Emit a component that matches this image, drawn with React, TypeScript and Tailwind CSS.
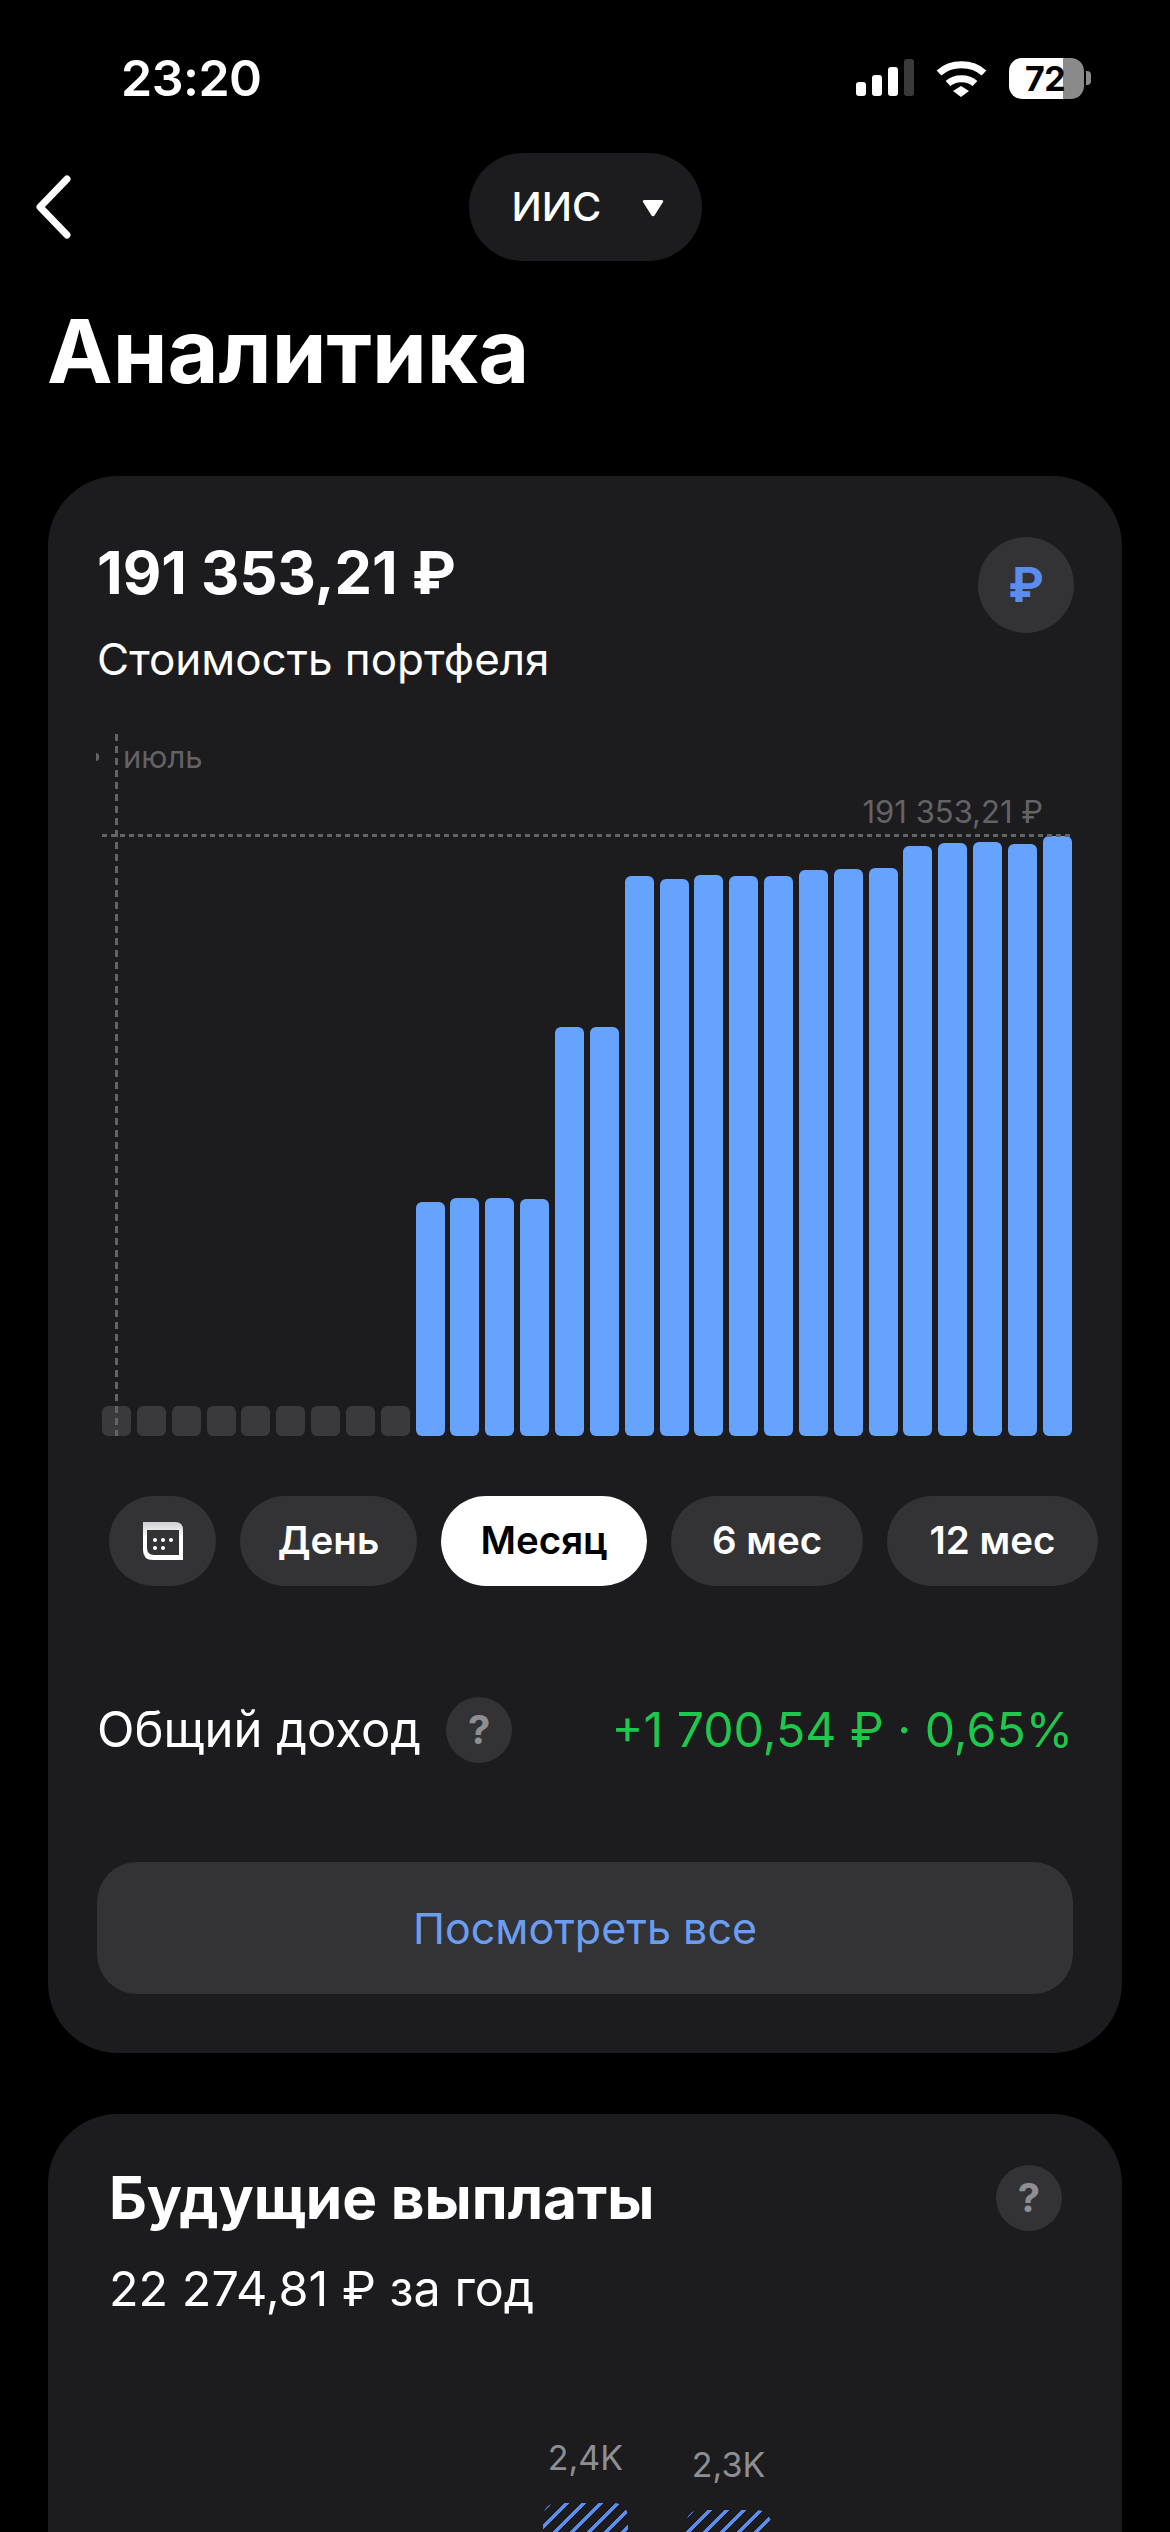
const FONT = "font-['Inter','Noto_Sans',sans-serif]";

// bar tops read off the reference, chart baseline is y=1437
const grayBars = Array.from({ length: 9 }, () => 30);
const blueBars = [
  234, 238, 238, 237, 409, 409, 560, 557, 561, 560, 560, 566, 567, 568, 590, 593, 594, 592, 600,
];

function StatusBar() {
  return (
    <div className="h-[153px] pt-[48px] flex justify-between items-start">
      <div className="ml-[121px] text-[50px] leading-[60px] font-semibold tracking-[-0.5px] text-white">
        23:20
      </div>
      <div className="mr-[79px] h-[60px] flex items-center">
        <div className="flex items-end gap-[6px] h-[37px] mt-[-2px]">
          <div className="w-[10px] h-[14px] rounded-[3px] bg-white" />
          <div className="w-[10px] h-[21px] rounded-[3px] bg-white" />
          <div className="w-[10px] h-[29px] rounded-[3px] bg-white" />
          <div className="w-[10px] h-[37px] rounded-[3px] bg-[#3a3a3c]" />
        </div>
        <svg className="ml-[22px] mt-[-1px]" width="51" height="38" viewBox="0 0 51 38" fill="none">
          <path d="M3 14C15 3 36 3 48 14" stroke="#fff" strokeWidth="7" />
          <path d="M12 24.5C19 18 32 18 39 24.5" stroke="#fff" strokeWidth="7" />
          <path d="M17 32L25 27L33 32L25 38Z" fill="#fff" />
        </svg>
        <div className="ml-[22px] relative w-[75px] h-[41px] rounded-[13px] overflow-hidden flex">
          <div className="w-[54px] bg-white" />
          <div className="flex-1 bg-[#8a8a8a]" />
          <div className="absolute inset-y-0 left-[16px] flex items-center text-[34px] font-bold text-black tracking-[-0.5px]">
            72
          </div>
        </div>
        <div className="ml-[2px] w-[5px] h-[14px] rounded-r-[4px] bg-[#8a8a8a]" />
      </div>
    </div>
  );
}

function NavRow() {
  return (
    <div className="grid grid-cols-[1fr_auto_1fr] items-center h-[108px]">
      <svg className="ml-[34px]" width="40" height="64" viewBox="0 0 40 64" fill="none">
        <path
          d="M33 4L6 32L33 60"
          stroke="#fff"
          strokeWidth="7"
          strokeLinecap="round"
          strokeLinejoin="round"
        />
      </svg>
      <div className="w-[233px] h-[108px] rounded-[54px] bg-[#1c1c1e] flex items-center pl-[43px]">
        <span className="text-[40px] leading-[48px] font-medium text-white">ИИС</span>
        <svg className="ml-[41px] mt-[3px]" width="22" height="17" viewBox="0 0 22 17">
          <path d="M1 2Q0 0 3 0H19Q22 0 21 2L12.5 15.5Q11 17 9.5 15.5Z" fill="#fff" />
        </svg>
      </div>
      <div />
    </div>
  );
}

function Chart() {
  return (
    <div className="relative ml-[54px] mt-[50px] w-[970px] h-[702px]">
      <div className="absolute inset-0 flex items-end justify-between">
        {grayBars.map((h, i) => (
          <div key={i} className="w-[29px] rounded-[6px] bg-[#3a3a3c]" style={{ height: h }} />
        ))}
        {blueBars.map((h, i) => (
          <div key={i} className="w-[29px] rounded-[6px] bg-[#66a3ff]" style={{ height: h }} />
        ))}
      </div>
      <div className="absolute left-[13px] top-0 bottom-0 w-[3px] bg-[repeating-linear-gradient(180deg,#636366_0,#636366_7px,transparent_7px,transparent_12px)]" />
      <div className="absolute left-0 right-0 top-[100px] h-[3px] bg-[repeating-linear-gradient(90deg,#636366_0,#636366_5px,transparent_5px,transparent_9px)]" />
      <div className="absolute left-[-6px] top-[19px] w-[3px] h-[8px] rounded-r-full bg-[#636366]" />
      <div className="absolute left-[21px] top-[3px] text-[31px] leading-[40px] text-[#636366]">июль</div>
      <div className="absolute right-[29px] top-[58px] text-[31px] leading-[40px] text-[#636366] whitespace-nowrap">
        191 353,21 ₽
      </div>
    </div>
  );
}

function PeriodTabs() {
  return (
    <div className="ml-[61px] mt-[60px] flex gap-[24px] text-[38.5px] font-semibold">
      <div className="w-[107px] h-[90px] rounded-[45px] bg-[#333336] flex items-center justify-center">
        <svg width="40" height="38" viewBox="0 0 40 38">
          <defs>
            <linearGradient id="cal" x1="0" y1="0" x2="0" y2="1">
              <stop offset="0" stopColor="#cfcfd1" />
              <stop offset="0.4" stopColor="#fff" />
            </linearGradient>
          </defs>
          <path d="M0 0H32Q40 0 40 8V38H10Q0 38 0 28Z" fill="url(#cal)" />
          <path d="M4 8H36V33H11Q4 33 4 26Z" fill="#333336" />
          <circle cx="12" cy="18" r="2" fill="#fff" />
          <circle cx="20" cy="18" r="2" fill="#fff" />
          <circle cx="28" cy="18" r="2" fill="#fff" />
          <circle cx="12" cy="26" r="2" fill="#fff" />
          <circle cx="20" cy="26" r="2" fill="#fff" />
        </svg>
      </div>
      <div className="w-[177px] h-[90px] rounded-[45px] bg-[#333336] flex items-center justify-center text-white">День</div>
      <div className="w-[206px] h-[90px] rounded-[45px] bg-white flex items-center justify-center text-black">Месяц</div>
      <div className="w-[192px] h-[90px] rounded-[45px] bg-[#333336] flex items-center justify-center text-white">6 мес</div>
      <div className="w-[211px] h-[90px] rounded-[45px] bg-[#333336] flex items-center justify-center text-white">12 мес</div>
    </div>
  );
}

function HelpDot() {
  return (
    <div className="w-[66px] h-[66px] rounded-full bg-[#333336] flex items-center justify-center text-[40px] font-bold text-[#8e8e93]">
      ?
    </div>
  );
}

function PortfolioCard() {
  return (
    <div className="mx-[48px] rounded-[70px] bg-[#1c1c1e] pt-[61px] pb-[59px]">
      <div className="flex justify-between pl-[49px] pr-[48px]">
        <div>
          <div className="text-[59.5px] leading-[70px] font-bold text-white whitespace-nowrap">191 353,21 ₽</div>
          <div className="mt-[27px] text-[44px] leading-[50px] text-white">Стоимость портфеля</div>
        </div>
        <div className="w-[96px] h-[96px] rounded-full bg-[#333336] flex items-center justify-center text-[48px] font-bold text-[#5b8def]">
          ₽
        </div>
      </div>
      <Chart />
      <PeriodTabs />
      <div className="mt-[111px] pl-[49px] pr-[49px] flex items-center justify-between">
        <div className="flex items-center gap-[25px]">
          <span className="text-[49px] leading-[66px] text-white">Общий доход</span>
          <HelpDot />
        </div>
        <span className="text-[48.2px] leading-[66px] text-[#1ec84c] whitespace-nowrap">+1 700,54 ₽ · 0,65%</span>
      </div>
      <div className="mt-[99px] mx-[49px] h-[132px] rounded-[40px] bg-[#333336] flex items-center justify-center text-[43px] text-[#6b9ef0]">
        Посмотреть все
      </div>
    </div>
  );
}

function PayoutBar({ label, offset }: { label: string; offset: string }) {
  return (
    <div className={"w-[85px] flex flex-col items-center " + offset}>
      <div className="text-[34px] leading-[40px] text-[#8e8e93]">{label}</div>
      <div className="mt-[25px] w-[85px] h-[60px] rounded-t-[14px] bg-[repeating-linear-gradient(-45deg,#5b8def_0,#5b8def_3px,transparent_3px,transparent_12px)]" />
    </div>
  );
}

function PayoutsCard() {
  return (
    <div className="mt-[61px] mx-[48px] flex-1 overflow-hidden rounded-t-[70px] bg-[#1c1c1e] pt-[49px]">
      <div className="flex justify-between items-center pl-[61px] pr-[60px]">
        <div className="text-[58.5px] leading-[70px] font-bold text-white">Будущие выплаты</div>
        <HelpDot />
      </div>
      <div className="ml-[61px] mt-[28px] text-[48.5px] leading-[56px] text-white">22 274,81 ₽ за год</div>
      <div className="ml-[495px] mt-[121px] flex gap-[58px]">
        <PayoutBar label="2,4K" offset="" />
        <PayoutBar label="2,3K" offset="mt-[7px]" />
      </div>
    </div>
  );
}

export default function App() {
  return (
    <div className={"w-[1170px] h-[2532px] overflow-hidden bg-black flex flex-col " + FONT}>
      <StatusBar />
      <NavRow />
      <h1 className="ml-[47px] mt-[40px] mb-[75px] text-[88px] leading-[100px] font-bold text-white">Аналитика</h1>
      <PortfolioCard />
      <PayoutsCard />
    </div>
  );
}
